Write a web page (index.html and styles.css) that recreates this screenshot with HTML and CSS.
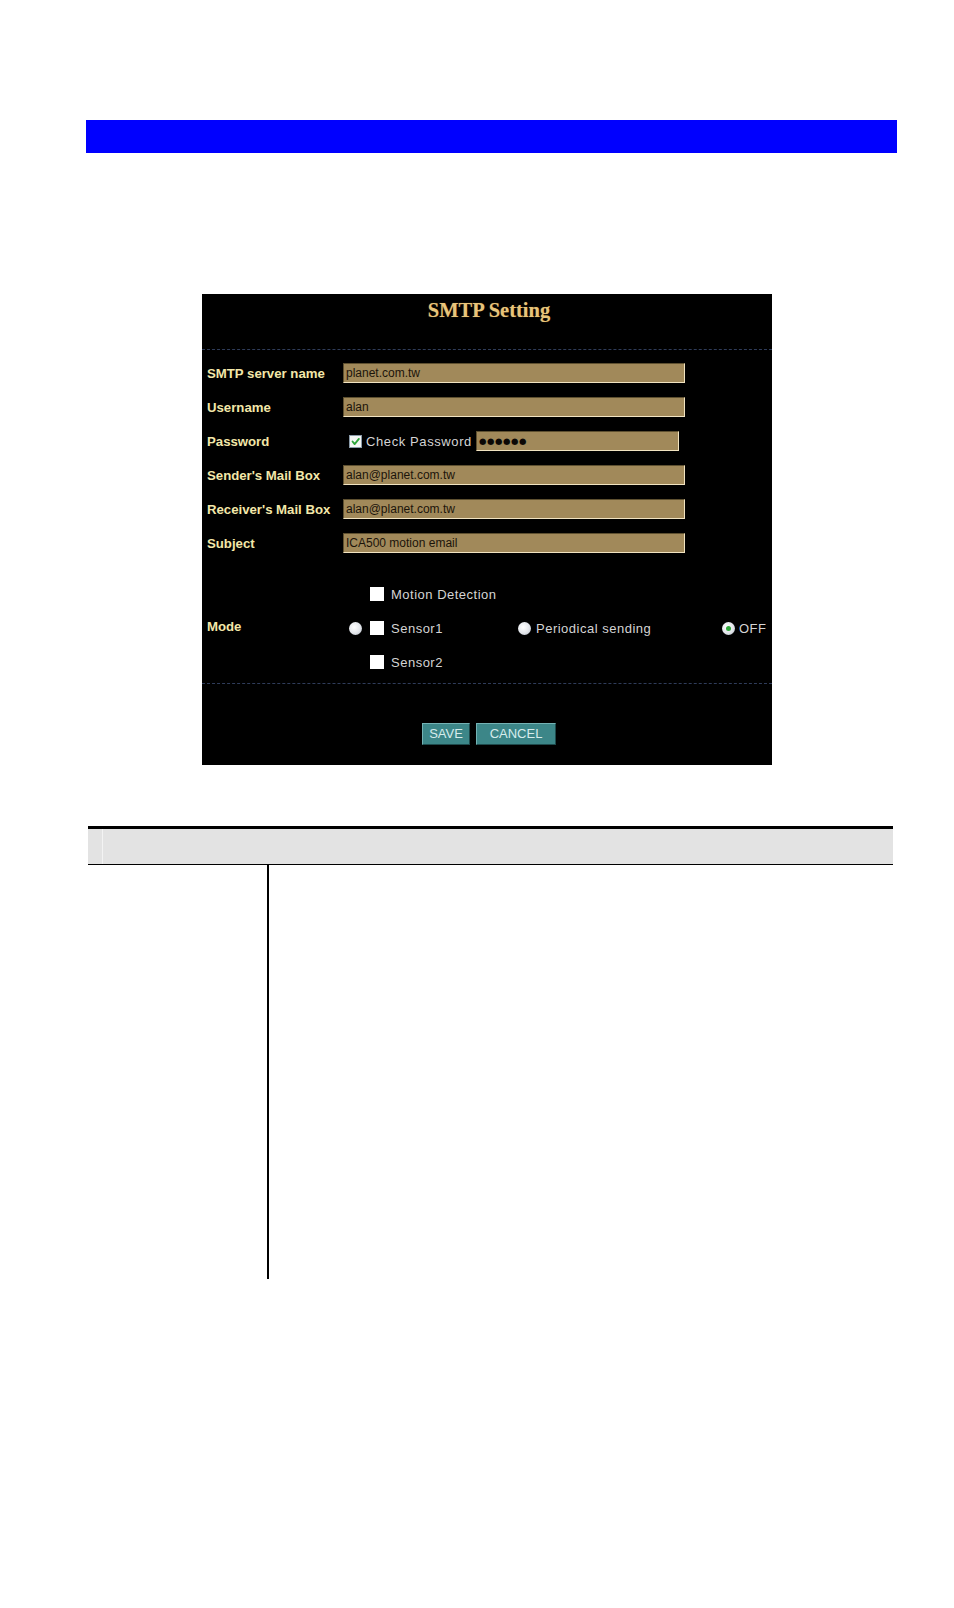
FILE: index.html
```html
<!DOCTYPE html>
<html>
<head>
<meta charset="utf-8">
<title>SMTP Setting</title>
<link rel="stylesheet" href="styles.css">
</head>
<body>
<div class="page">
  <div class="bar"></div>

  <div class="shot">
    <div class="title">SMTP Setting</div>
    <div class="dash top"></div>

    <div class="form">
      <div class="row">
        <div class="label">SMTP server name</div>
        <div class="field"><span class="input wide">planet.com.tw</span></div>
      </div>
      <div class="row">
        <div class="label">Username</div>
        <div class="field"><span class="input wide">alan</span></div>
      </div>
      <div class="row">
        <div class="label">Password</div>
        <div class="field pwfield">
          <span class="cb checked"><svg viewBox="0 0 13 13" width="13" height="13"><path d="M3 6.5 L5.5 9.5 L10.5 3.5" fill="none" stroke="#2fa53a" stroke-width="2.2" stroke-linecap="round" stroke-linejoin="round"/></svg></span>
          <span class="opt">Check Password</span>
          <span class="input pw"><span class="dots">●●●●●●</span></span>
        </div>
      </div>
      <div class="row">
        <div class="label">Sender's Mail Box</div>
        <div class="field"><span class="input wide">alan@planet.com.tw</span></div>
      </div>
      <div class="row">
        <div class="label">Receiver's Mail Box</div>
        <div class="field"><span class="input wide">alan@planet.com.tw</span></div>
      </div>
      <div class="row">
        <div class="label">Subject</div>
        <div class="field"><span class="input wide">ICA500 motion email</span></div>
      </div>
    </div>

    <div class="mode">
      <div class="m-label">Mode</div>
      <div class="m-radio"><span class="radio"></span></div>
      <div class="m-check r1"><span class="cb"></span><span class="opt">Motion Detection</span></div>
      <div class="m-check r2"><span class="cb"></span><span class="opt">Sensor1</span></div>
      <div class="m-check r3"><span class="cb"></span><span class="opt">Sensor2</span></div>
      <div class="m-period"><span class="radio"></span><span class="opt">Periodical sending</span></div>
      <div class="m-off"><span class="radio on"></span><span class="opt">OFF</span></div>
    </div>

    <div class="dash bottom"></div>

    <div class="buttons">
      <span class="btn save">SAVE</span>
      <span class="btn cancel">CANCEL</span>
    </div>
  </div>

  <div class="table">
    <div class="thead"><div class="thcell"></div></div>
    <div class="tbody">
      <div class="col1"></div>
      <div class="col2"></div>
    </div>
  </div>
</div>
</body>
</html>
```

FILE: styles.css
```css
html, body {
  margin: 0;
  padding: 0;
  background: #ffffff;
}

.page {
  padding-top: 120px;
  height: 1488px;
  font-family: "Liberation Sans", Arial, sans-serif;
}

.bar {
  margin-left: 86px;
  width: 811px;
  height: 33px;
  background: #0000ff;
}

.shot {
  margin-top: 141px;
  margin-left: 202px;
  width: 570px;
  height: 471px;
  background: #000000;
  box-sizing: border-box;
  display: flex;
  flex-direction: column;
}

.title {
  padding-top: 4px;
  height: 30px;
  line-height: 24px;
  text-align: center;
  font-family: "Liberation Serif", "Times New Roman", serif;
  font-weight: bold;
  font-size: 20.5px;
  color: #e8c47a;
  padding-left: 4px;
  text-shadow: 0 0 1px #6a5020;
}

.dash {
  height: 0;
  border-top: 1px dashed #2f3c5a;
}

.dash.top {
  margin-top: 21px;
}

.dash.bottom {
  margin-top: 4px;
}

.form {
  margin-top: 6px;
  display: flex;
  flex-direction: column;
}

.row {
  display: flex;
  align-items: center;
  height: 34px;
}

.label {
  width: 136px;
  padding-left: 5px;
  font-weight: bold;
  font-size: 13.2px;
  color: #f3e7a9;
  white-space: nowrap;
}

.field {
  display: flex;
  align-items: center;
}

.input {
  display: block;
  box-sizing: border-box;
  height: 20px;
  line-height: 18px;
  padding-left: 2px;
  background: #a1895a;
  border-top: 1px solid #5e5030;
  border-left: 1px solid #5e5030;
  border-right: 1px solid #f1e3c1;
  border-bottom: 1px solid #f1e3c1;
  font-size: 12px;
  color: #1c140a;
}

.wide {
  width: 342px;
}

.pwfield {
  padding-left: 6px;
}

.pw {
  width: 203px;
  margin-left: 4px;
}

.dots {
  font-family: "DejaVu Sans", sans-serif;
  font-size: 8.5px;
  letter-spacing: 0.6px;
  color: #0c0806;
  position: relative;
  top: -1px;
}

.cb {
  display: inline-block;
  box-sizing: border-box;
  width: 14px;
  height: 14px;
  background: #ffffff;
  flex: none;
}

.cb.checked {
  width: 13px;
  height: 13px;
  border: 1px solid #8a9aa8;
  background: #f4f6f4;
  display: flex;
  align-items: center;
  justify-content: center;
}

.cb.checked svg {
  display: block;
}

.opt {
  font-size: 13px;
  letter-spacing: 0.5px;
  color: #d4d4d4;
  white-space: nowrap;
}

.pwfield .opt {
  margin-left: 4px;
  letter-spacing: 0.6px;
}

.mode {
  margin-top: 17px;
  display: grid;
  grid-template-columns: 141px 27px 148px 204px 1fr;
  grid-template-rows: 34px 34px 34px;
  align-items: center;
}

.m-label {
  grid-column: 1;
  grid-row: 2;
  padding-left: 5px;
  font-weight: bold;
  font-size: 13.2px;
  color: #f3e7a9;
  position: relative;
  top: -2px;
}

.m-radio {
  grid-column: 2;
  grid-row: 2;
  padding-left: 6px;
  display: flex;
}

.m-check {
  grid-column: 3;
  display: flex;
  align-items: center;
  gap: 7px;
}

.r1 { grid-row: 1; }
.r2 { grid-row: 2; }
.r3 { grid-row: 3; }

.m-period {
  grid-column: 4;
  grid-row: 2;
  display: flex;
  align-items: center;
  gap: 5px;
}

.m-off {
  grid-column: 5;
  grid-row: 2;
  display: flex;
  align-items: center;
  gap: 4px;
}

.radio {
  display: inline-block;
  box-sizing: border-box;
  width: 13px;
  height: 13px;
  border-radius: 50%;
  background: radial-gradient(circle at 40% 40%, #ffffff 0%, #e2e5ea 55%, #aab1bc 100%);
  flex: none;
  position: relative;
}

.radio.on::after {
  content: "";
  position: absolute;
  left: 4px;
  top: 4px;
  width: 5px;
  height: 5px;
  border-radius: 50%;
  background: #2ea83a;
}

.buttons {
  margin-top: 39px;
  display: flex;
  justify-content: center;
  gap: 6px;
  padding-left: 4px;
}

.btn {
  display: block;
  box-sizing: border-box;
  height: 22px;
  line-height: 20px;
  text-align: center;
  background: #3c8688;
  border-top: 1px solid #74b2b4;
  border-left: 1px solid #74b2b4;
  border-right: 1px solid #1e4a4c;
  border-bottom: 1px solid #1e4a4c;
  font-size: 13px;
  color: #d6ecec;
}

.save { width: 48px; }
.cancel { width: 80px; }

.table {
  margin-top: 61px;
  margin-left: 88px;
  width: 805px;
  border-top: 3px solid #000000;
}

.thead {
  height: 36px;
  background: #e3e3e3;
  border-bottom: 1px solid #000000;
  box-sizing: border-box;
  padding-left: 14px;
}

.thcell {
  height: 100%;
  border-left: 1px solid #f3f3f3;
}

.tbody {
  display: flex;
  height: 414px;
}

.col1 {
  width: 179px;
  border-right: 2px solid #000000;
}

.col2 {
  flex: 1;
}
```
